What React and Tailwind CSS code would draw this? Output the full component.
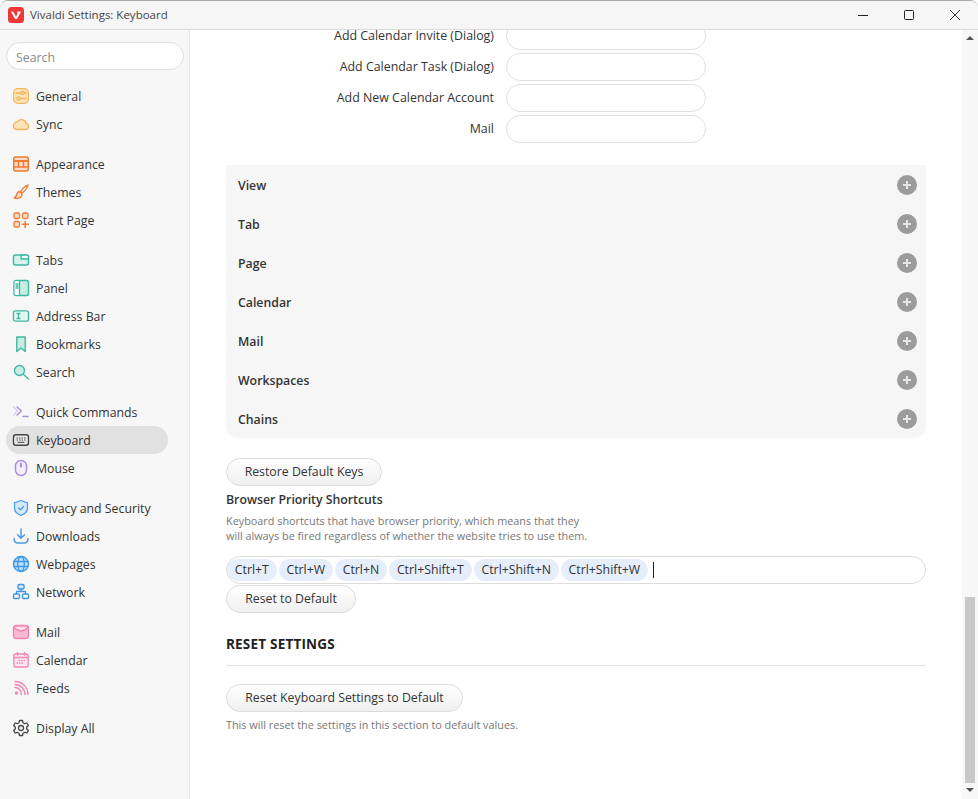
const font = { fontFamily: '"Open Sans", "Noto Sans", sans-serif' }

// sidebar icons, 20x20 box
const Ico = ({ children }) => (
  <svg width="20" height="20" viewBox="0 0 20 20" fill="none" strokeWidth="1.3" strokeLinecap="round" strokeLinejoin="round" className="shrink-0">
    {children}
  </svg>
)

const icons = {
  General: (
    <Ico>
      <rect x="2.700" y="2.700" width="14.600" height="14.600" rx="4" fill="#fde3b8" stroke="#f5b45c" />
      <circle cx="11.500" cy="7" r="1.600" stroke="#f5b45c" />
      <circle cx="7.500" cy="12.500" r="1.600" stroke="#f5b45c" />
      <path d="M5 7h5M13 7h2M9 12.500h6" stroke="#f5b45c" />
    </Ico>
  ),
  Sync: (
    <Ico>
      <path d="M5.500 15.500h9a3.200 3.200 0 0 0 .6-6.300 5 5 0 0 0-9.100-1.200 4 4 0 0 0-3.700 4.300c.2 1.800 1.600 3.200 3.200 3.200z" fill="#fde3b8" stroke="#f5b45c" />
    </Ico>
  ),
  Appearance: (
    <Ico>
      <rect x="2.700" y="3" width="14.600" height="14" rx="2" fill="#fbdcc6" stroke="#ee7a35" strokeWidth="1.500" />
      <path d="M3 7h14" stroke="#ee7a35" strokeWidth="2" />
      <path d="M7.500 8v5M12.500 8v5M3 13h14" stroke="#ee7a35" strokeWidth="1.500" />
    </Ico>
  ),
  Themes: (
    <Ico>
      <path d="M17 3c-2.500 1-5.500 3.500-7.500 6.500l1.500 1.500C14 9 16.500 6 17 3z" stroke="#ee7a35" />
      <path d="M9 9.500c-2.500 0-3 1.500-3.500 3.500-.3 1.300-1 2-2.300 3 2.800.6 6 .4 7.300-1.700.7-1.200.6-2.300-.1-3.300z" fill="#fbdcc6" stroke="#ee7a35" />
    </Ico>
  ),
  "Start Page": (
    <Ico>
      <rect x="3" y="3" width="5.500" height="5.500" rx="1.500" fill="#fbdcc6" stroke="#ee7a35" />
      <rect x="11.500" y="3" width="5.500" height="5.500" rx="1.500" fill="#fbdcc6" stroke="#ee7a35" />
      <rect x="3" y="11.500" width="5.500" height="5.500" rx="1.500" fill="#fbdcc6" stroke="#ee7a35" />
      <path d="M14.200 11.500v6M11.300 14.300h6" stroke="#ee7a35" strokeWidth="1.500" />
    </Ico>
  ),
  Tabs: (
    <Ico>
      <rect x="2.500" y="5" width="15" height="10" rx="2" stroke="#3fb8a2" strokeWidth="1.400" fill="#d5f1ea" />
      <path d="M10 9V7a2 2 0 0 1 2-2h3.500a2 2 0 0 1 2 2v2z" fill="#fff" stroke="#3fb8a2" strokeWidth="1.400" />
    </Ico>
  ),
  Panel: (
    <Ico>
      <rect x="3" y="2.500" width="14.500" height="15" rx="2" fill="#c8ede3" stroke="#3fb8a2" strokeWidth="1.400" />
      <rect x="3.700" y="3.200" width="4.800" height="13.600" fill="#fff" />
      <path d="M8.500 3v14M5 6h2M5 8h2M5 10h2" stroke="#3fb8a2" />
    </Ico>
  ),
  "Address Bar": (
    <Ico>
      <rect x="2.500" y="4.800" width="15" height="10.400" rx="2" fill="#e4f6f1" stroke="#3fb8a2" />
      <path d="M6 7.500h3M6 12.500h3M7.500 7.500v5" stroke="#3fb8a2" />
    </Ico>
  ),
  Bookmarks: (
    <Ico>
      <path d="M5.800 3h8.400v14.500L10 14l-4.200 3.500z" fill="#c8ede3" stroke="#3fb8a2" strokeWidth="1.400" />
    </Ico>
  ),
  Search: (
    <Ico>
      <circle cx="8.500" cy="8.500" r="5" fill="#c8ede3" stroke="#3fb8a2" />
      <path d="M12.500 12.500l5 4.500" stroke="#3fb8a2" />
    </Ico>
  ),
  "Quick Commands": (
    <Ico>
      <path d="M2.500 5l4 4-4 4" stroke="#d9ccf5" />
      <path d="M6 5l4.500 4-4.500 4" stroke="#a78be0" />
      <path d="M12 14.500h5" stroke="#a78be0" />
    </Ico>
  ),
  Keyboard: (
    <Ico>
      <rect x="2.500" y="4.800" width="15" height="10.400" rx="2.500" fill="#e8e8e8" stroke="#444" strokeWidth="1.400" />
      <path d="M6 8h.6M8.500 8h.6M11 8h.6M13.500 8h.6M6 10h.6M8.500 10h.6M11 10h.6M13.500 10h.6M7 12.300h6" stroke="#444" strokeWidth="1" />
    </Ico>
  ),
  Mouse: (
    <Ico>
      <rect x="4.500" y="2.500" width="11" height="15" rx="5.500" fill="#f3eefc" stroke="#a78be0" strokeWidth="1.400" />
      <path d="M10 5.500v3" stroke="#a78be0" strokeWidth="2" />
    </Ico>
  ),
  "Privacy and Security": (
    <Ico>
      <path d="M10 2.500l6.500 2.300v5c0 3.500-2.700 6.200-6.500 7.700-3.800-1.500-6.500-4.200-6.500-7.700v-5z" fill="#d5e9fb" stroke="#4a9ee8" />
      <path d="M7.500 10l2 1.800 3-3.300" stroke="#4a9ee8" />
    </Ico>
  ),
  Downloads: (
    <Ico>
      <path d="M10 3v9M6.500 8.800L10 12.300l3.500-3.500" stroke="#4a9ee8" strokeWidth="1.500" />
      <path d="M3 12.500c0 2.800 1.800 4.500 4 4.500h6c2.200 0 4-1.700 4-4.500" stroke="#4a9ee8" strokeWidth="1.500" />
    </Ico>
  ),
  Webpages: (
    <Ico>
      <circle cx="10" cy="10" r="7.500" fill="#bfe0fa" stroke="#3d97e6" strokeWidth="1.400" />
      <ellipse cx="10" cy="10" rx="3.300" ry="7.500" stroke="#3d97e6" />
      <path d="M3 7.500h14M3 12.500h14" stroke="#3d97e6" />
    </Ico>
  ),
  Network: (
    <Ico>
      <rect x="7" y="2.500" width="6" height="4.500" rx="1.200" fill="#d5e9fb" stroke="#3d97e6" strokeWidth="1.400" />
      <rect x="2.500" y="12" width="6" height="4.500" rx="1.200" stroke="#3d97e6" strokeWidth="1.400" />
      <rect x="11.500" y="12" width="6" height="4.500" rx="1.200" stroke="#3d97e6" strokeWidth="1.400" />
      <path d="M10 7v2.500M5.500 12V9.500h9V12" stroke="#3d97e6" />
    </Ico>
  ),
  Mail: (
    <Ico>
      <rect x="2.500" y="3.500" width="15" height="13" rx="3" fill="#fbb9d6" stroke="#f285b5" strokeWidth="1.400" />
      <path d="M3 5.500c2 2 4.500 3.500 7 3.500s5-1.500 7-3.500" fill="#fde7f0" stroke="#f285b5" />
    </Ico>
  ),
  Calendar: (
    <Ico>
      <rect x="2.800" y="4" width="14.400" height="13" rx="2" fill="#fde7f0" stroke="#f285b5" strokeWidth="1.300" />
      <path d="M3 7.500h14M6.500 2.500V5M13.500 2.500V5" stroke="#f285b5" strokeWidth="1.300" />
      <path d="M8 10.500h.6M10.500 10.500h.6M13 10.500h.6M6 13h.6M8.500 13h.6M11 13h.6" stroke="#f285b5" />
    </Ico>
  ),
  Feeds: (
    <Ico>
      <circle cx="5.500" cy="15" r="1.700" fill="#f285b5" />
      <path d="M4 9.500c3.500 0 6.500 3 6.500 7M4 6.500c5.500 0 10 4.500 10 10M4 3.500c7.500 0 13 6 13 13" stroke="#f285b5" strokeWidth="1.400" />
    </Ico>
  ),
  "Display All": (
    <Ico>
      <path d="M8.500 2.500h3l.5 2.200 1.700 1 2.200-.7 1.500 2.600-1.700 1.500v1.800l1.700 1.500-1.500 2.600-2.200-.7-1.700 1-.5 2.200h-3l-.5-2.200-1.700-1-2.200.7-1.500-2.600 1.700-1.500V9.100L2.600 7.600l1.500-2.600 2.200.7 1.700-1z" stroke="#444" />
      <circle cx="10" cy="10" r="2.500" stroke="#444" />
    </Ico>
  ),
}

const groups = [
  ["General", "Sync"],
  ["Appearance", "Themes", "Start Page"],
  ["Tabs", "Panel", "Address Bar", "Bookmarks", "Search"],
  ["Quick Commands", "Keyboard", "Mouse"],
  ["Privacy and Security", "Downloads", "Webpages", "Network"],
  ["Mail", "Calendar", "Feeds"],
  ["Display All"],
]

const btn =
  "block h-[28px] rounded-[14px] border border-[#dcdcdc] bg-gradient-to-b from-white to-[#f0f0f0] text-[12.3px] text-[#333]"

function Sidebar() {
  return (
    <aside className="w-[190px] shrink-0 border-r border-[#e6e6e6] bg-[#f7f7f7] pl-[6px] pt-[12px]">
      <div className="flex h-[28px] w-[178px] items-center rounded-[14px] border border-[#dedede] bg-white pl-[9px] pt-[4px] text-[12.3px] text-[#8a8a8a]">
        Search
      </div>
      <div className="mt-[12px] flex flex-col gap-[12px]">
        {groups.map((g, i) => (
          <div key={i}>
            {g.map((name) => (
              <div
                key={name}
                className={
                  "flex h-[28px] w-[162px] items-center gap-[4px] rounded-[14px] pl-[5px] text-[12.3px] text-[#333] " +
                  (name === "Keyboard" ? "bg-[#e1e1e1]" : "")
                }
              >
                {icons[name]}
                <span className="ml-[1px] whitespace-nowrap pt-[2px]">{name}</span>
              </div>
            ))}
          </div>
        ))}
      </div>
    </aside>
  )
}

const shortcuts = ["Add Calendar Invite (Dialog)", "Add Calendar Task (Dialog)", "Add New Calendar Account", "Mail"]
const sections = ["View", "Tab", "Page", "Calendar", "Mail", "Workspaces", "Chains"]
const keys = ["Ctrl+T", "Ctrl+W", "Ctrl+N", "Ctrl+Shift+T", "Ctrl+Shift+N", "Ctrl+Shift+W"]

function Content() {
  return (
    <main className="min-w-0 flex-1 pl-[36px] pr-[36px]">
      {/* first row scrolls under the title bar */}
      <div className="-mt-[8px] flex flex-col gap-[3px]">
        {shortcuts.map((s) => (
          <div key={s} className="flex items-center">
            <div className="w-[268px] whitespace-nowrap text-right text-[12.4px] leading-[12px] text-[#333]">{s}</div>
            <div className="ml-[12px] h-[28px] w-[200px] rounded-[14px] border border-[#e0e0e0] bg-white" />
          </div>
        ))}
      </div>

      <div className="mt-[22px] rounded-b-[12px] bg-[#f6f6f6]">
        {sections.map((s) => (
          <div key={s} className="flex h-[39px] items-center justify-between pl-[12px] pr-[9px]">
            <span className="pt-[4px] text-[12.3px] font-semibold text-[#333]">{s}</span>
            <span className="flex h-[20px] w-[20px] items-center justify-center rounded-full bg-[#9c9c9c]">
              <svg width="10" height="10" viewBox="0 0 10 10">
                <path d="M5 1v8M1 5h8" stroke="#e6e6e6" strokeWidth="2" />
              </svg>
            </span>
          </div>
        ))}
      </div>

      <button className={btn + " mt-[20px] w-[156px]"}>Restore Default Keys</button>
      <h3 className="mt-[4px] h-[20px] text-[12.3px] font-semibold leading-[20px] text-[#333]">Browser Priority Shortcuts</h3>
      <p className="mt-[3px] w-[370px] text-[10.85px] leading-[15px] text-[#777]">
        Keyboard shortcuts that have browser priority, which means that they will always be fired regardless of whether the website tries to use them.
      </p>
      <div className="mt-[13px] flex h-[28px] items-center gap-[2px] rounded-[14px] border border-[#dcdcdc] bg-white">
        {keys.map((k) => (
          <span key={k} className="flex h-[22px] items-center rounded-[11px] bg-[#e6eefb] px-[7.8px] pt-px text-[12.3px] text-[#333]">
            {k}
          </span>
        ))}
        <span className="ml-[3px] h-[16px] w-px bg-[#222]" />
      </div>
      <button className={btn + " mt-px w-[130px]"}>Reset to Default</button>

      <h2 className="mt-[21px] text-[13.5px] font-bold leading-[20px] tracking-[0.2px] text-[#222]">RESET SETTINGS</h2>
      <div className="mt-[11px] h-px bg-[#e2e2e2]" />
      <button className={btn + " mt-[18px] w-[237px] pt-px"}>Reset Keyboard Settings to Default</button>
      <p className="mt-[5px] text-[10.85px] leading-[15px] text-[#777]">This will reset the settings in this section to default values.</p>
    </main>
  )
}

export default function App() {
  return (
    <div style={font} className="flex h-[799px] w-[978px] flex-col overflow-hidden rounded-t-[8px] border-t border-[#a9a9a9] bg-white">
      <header className="relative z-10 flex h-[29px] shrink-0 items-center border-b border-[#dcdcdc] bg-[#f6f6f6] pl-[8px]">
        <svg width="16" height="16" viewBox="0 0 16 16" className="shrink-0">
          <rect width="16" height="16" rx="3.500" fill="#ef3939" />
          <path d="M4 4.500c1 0 1.400.4 1.800 1.200L8 9.500l1.300-2.300c.4-.7.200-1.300-.1-1.700-.3-.6.100-1 .8-1h2c.6 0 .9.500.6 1.100L9.200 11.500c-.5.900-1.900.9-2.400 0L3.400 5.600C3.100 5 3.400 4.500 4 4.500z" fill="#fff" />
        </svg>
        <span className="ml-[6px] text-[11.5px] text-[#444]">Vivaldi Settings: Keyboard</span>
        <div className="ml-auto flex items-center">
          <span className="flex w-[46px] justify-center">
            <svg width="10" height="10" viewBox="0 0 10 10"><path d="M0 5.500h10" stroke="#222" /></svg>
          </span>
          <span className="flex w-[46px] justify-center">
            <svg width="10" height="10" viewBox="0 0 10 10"><rect x=".5" y=".5" width="9" height="9" rx="1" fill="none" stroke="#222" /></svg>
          </span>
          <span className="flex w-[46px] justify-center">
            <svg width="10" height="10" viewBox="0 0 10 10"><path d="M0 0l10 10M10 0L0 10" stroke="#222" strokeWidth=".9" /></svg>
          </span>
        </div>
      </header>
      <div className="flex min-h-0 flex-1">
        <Sidebar />
        <Content />
        <div className="flex w-[16px] shrink-0 flex-col items-center bg-[#f7f7f7] pt-[6px]">
          <span className="h-0 w-0 border-x-[4px] border-b-[4px] border-x-transparent border-b-[#555]" />
          <div className="mt-[557px] ml-[3px] h-[186px] w-[10px] self-start bg-[#c8c8c8]" />
          <span className="mt-[5px] h-0 w-0 border-x-[4px] border-t-[4px] border-x-transparent border-t-[#555]" />
        </div>
      </div>
    </div>
  )
}
